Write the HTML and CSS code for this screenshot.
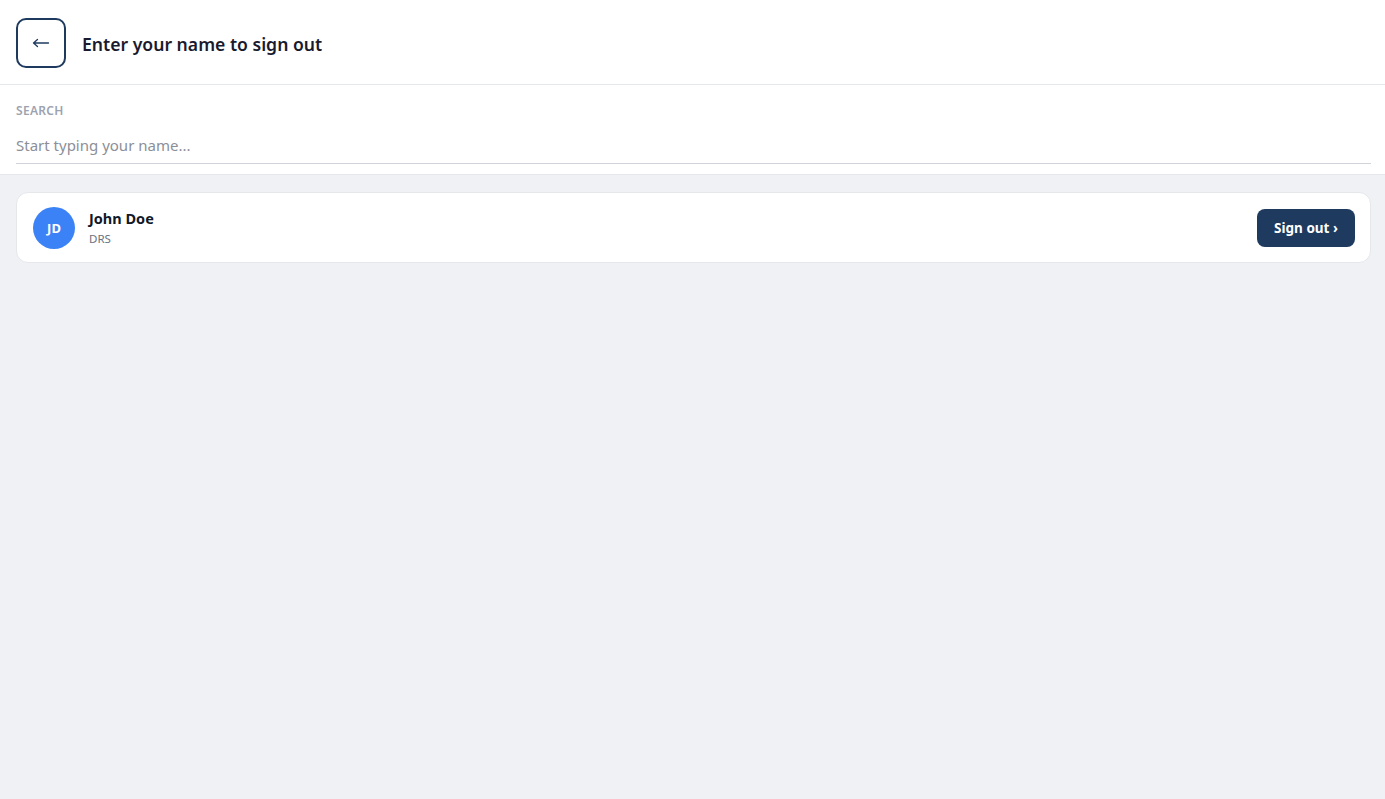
FILE: index.html
```html
<!DOCTYPE html>
<html lang="en">
<head>
<meta charset="utf-8">
<title>Sign out</title>
<link rel="stylesheet" href="styles.css">
</head>
<body>
<header class="topbar">
  <button class="back-btn" type="button" aria-label="Back">
    <svg width="18" height="10" viewBox="0 0 18 10" aria-hidden="true">
      <path d="M1.5 5H16.5M1.5 5L5.5 1.5M1.5 5L5.5 8.5" fill="none" stroke="#1e3a5f" stroke-width="1.3" stroke-linecap="round" stroke-linejoin="round"/>
    </svg>
  </button>
  <h1 class="title">Enter your name to sign out</h1>
</header>
<section class="search">
  <label class="search-label" for="name">SEARCH</label>
  <input id="name" class="search-input" type="text" placeholder="Start typing your name..." autofocus>
</section>
<main class="list">
  <div class="card">
    <div class="avatar">JD</div>
    <div class="person">
      <div class="person-name">John Doe</div>
      <div class="person-dept">DRS</div>
    </div>
    <button class="signout-btn" type="button">Sign out ›</button>
  </div>
</main>
</body>
</html>
```
FILE: styles.css
```css
* { box-sizing: border-box; }
html, body { height: 100%; }
body {
  margin: 0;
  background: #f0f1f5;
  font-family: "Noto Sans", "Open Sans", sans-serif;
  color: #111827;
}
.topbar {
  background: #fff;
  height: 85px;
  border-bottom: 1px solid #e5e7eb;
  display: flex;
  align-items: center;
  gap: 16px;
  padding: 1px 16px 0;
}
.back-btn {
  width: 50px;
  height: 50px;
  border: 2px solid #1e3a5f;
  border-radius: 10px;
  background: #fff;
  display: flex;
  align-items: center;
  justify-content: center;
  padding: 0;
}
.back-btn svg { display: block; }
.title {
  margin: 3px 0 0;
  font-size: 17.6px;
  font-weight: 600;
  color: #1a1a2e;
}
.search {
  background: #fff;
  padding: 18px 14px 10px 16px;
  border-bottom: 1px solid #e5e7eb;
  display: flex;
  flex-direction: column;
}
.search-label {
  font-size: 12px;
  font-weight: 600;
  letter-spacing: 0.3px;
  color: #9ca3af;
  line-height: 16px;
}
.search-input {
  margin-top: 11px;
  border: none;
  border-bottom: 1px solid #d1d5db;
  outline: none;
  font-family: inherit;
  font-size: 15px;
  color: #111827;
  padding: 5px 0 8px;
  background: transparent;
  caret-color: #111827;
}
.search-input::placeholder { color: #8b8f98; }
.list {
  padding: 17px 14px 16px 16px;
}
.card {
  background: #fff;
  border: 1px solid #e5e7eb;
  border-radius: 12px;
  height: 71px;
  display: flex;
  align-items: center;
  padding: 0 15px 0 16px;
  gap: 14px;
}
.avatar {
  width: 42px;
  height: 42px;
  border-radius: 50%;
  background: #3b82f6;
  color: #fff;
  font-weight: 700;
  font-size: 13px;
  display: flex;
  align-items: center;
  justify-content: center;
  flex: none;
}
.person { flex: 1; display: flex; flex-direction: column; gap: 3px; margin-top: -1px; }
.person-name { font-size: 14.5px; font-weight: 700; color: #111827; line-height: 20px; }
.person-dept { font-size: 11.5px; color: #6b7280; line-height: 16px; }
.signout-btn {
  background: #1e3a5f;
  color: #fff;
  border: none;
  border-radius: 8px;
  width: 98px;
  height: 38px;
  font-family: inherit;
  font-size: 13.5px;
  font-weight: 700;
  padding: 0;
}
```
